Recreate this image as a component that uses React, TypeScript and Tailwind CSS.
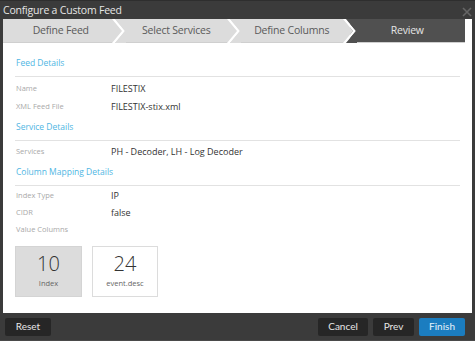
import React from 'react';

const steps = ['Define Feed', 'Select Services', 'Define Columns', 'Review'];

function Chevron({ left, right }: { left: string; right: string }) {
  return (
    <svg className="absolute right-[-7px] top-0 z-10" width="14" height="24" viewBox="0 0 14 24">
      <polygon points="0,0 10,12 0,24" fill={left} />
      <polygon points="0,0 3,0 13,12 3,24 0,24 10,12" fill="#ffffff" />
      <polygon points="3,0 14,0 14,24 3,24 13,12" fill={right} />
    </svg>
  );
}

function Step({ label, index }: { label: string; index: number }) {
  const active = index === 3;
  const bg = active ? '#505050' : '#dcdcdc';
  const next = index + 1 === 3 ? '#505050' : '#dcdcdc';
  return (
    <div className="relative flex-1 h-full flex items-center justify-center" style={{ background: bg }}>
      <span className={active ? 'text-[10.5px] tracking-[-0.2px] text-[#e4e4e4]' : 'text-[10.5px] tracking-[-0.2px] text-[#5a5a5a]'}>
        {label}
      </span>
      {index < steps.length - 1 && <Chevron left={bg} right={next} />}
    </div>
  );
}

function Row({ label, value }: { label: string; value: string }) {
  return (
    <div className="flex items-center h-[17px]">
      <span className="w-[95px] text-[7.5px] text-[#a9a9a9]">{label}</span>
      <span className="text-[9px] text-[#333]">{value}</span>
    </div>
  );
}

function Section({ title, first }: { title: string; first?: boolean }) {
  return (
    <div className={first ? 'flex flex-col' : 'flex flex-col mt-[2px]'}>
      <div className="h-[23px] flex items-start">
        <span className="h-[20px] flex items-center text-[8.5px] text-[#4fb6e3]">{title}</span>
      </div>
      <div className="h-px bg-[#e2e2e2] mr-[12px] -ml-px" />
    </div>
  );
}

export default function App() {
  return (
    <div className="w-[475px] h-[341px] bg-[#3b3b3b] flex flex-col" style={{ fontFamily: '"Open Sans", sans-serif' }}>
      <div className="h-[19px] flex items-center justify-between pl-[3px] pr-[2px] border-t border-[#2e2e2e]">
        <span className="text-[10.5px] tracking-[-0.2px] text-[#e6e6e6] leading-none">Configure a Custom Feed</span>
        <svg width="12" height="12" viewBox="0 0 12 12" className="mt-[4px]">
          <path d="M2 2 L10 10 M10 2 L2 10" stroke="#666666" strokeWidth="1.6" />
        </svg>
      </div>
      <div className="flex-1 flex flex-col ml-[3px] mr-[3px] bg-white">
        <div className="h-[24px] flex mr-[7px] border-b border-[#cfcfcf]">
          {steps.map((s, i) => (
            <Step key={s} label={s} index={i} />
          ))}
        </div>
        <div className="flex-1 flex flex-col pl-[13px] pt-[10px]">
          <Section title="Feed Details" first />
          <div className="flex flex-col pt-[3px]">
            <Row label="Name" value="FILESTIX" />
            <div className="h-[1px]" />
            <Row label="XML Feed File" value="FILESTIX-stix.xml" />
          </div>
          <Section title="Service Details" />
          <div className="flex flex-col pt-[2px]">
            <Row label="Services" value="PH - Decoder,  LH - Log Decoder" />
          </div>
          <Section title="Column Mapping Details" />
          <div className="flex flex-col pt-[1px]">
            <Row label="Index Type" value="IP" />
            <Row label="CIDR" value="false" />
            <Row label="Value Columns" value="" />
          </div>
          <div className="flex gap-[10px] mt-[8px] -ml-px">
            <div className="w-[67px] h-[51px] bg-[#dcdcdc] border border-[#d4d4d4] flex flex-col items-center justify-center">
              <span className="text-[20px] font-light leading-none text-[#333]">10</span>
              <span className="text-[7.5px] text-[#666] mt-[4px]">Index</span>
            </div>
            <div className="w-[66px] h-[51px] bg-white border border-[#dcdcdc] flex flex-col items-center justify-center">
              <span className="text-[20px] font-light leading-none text-[#333]">24</span>
              <span className="text-[7.5px] text-[#666] mt-[4px]">event.desc</span>
            </div>
          </div>
        </div>
      </div>
      <div className="h-[28px] flex items-center px-[5px] gap-[4px] border-b border-[#4a4a4a]" style={{ fontFamily: 'Lato, sans-serif' }}>
        <button className="w-[46px] h-[18px] bg-[#262626] text-[10px] text-[#e6e6e6] rounded-[2px]">Reset</button>
        <div className="flex-1" />
        <button className="w-[50px] h-[18px] bg-[#262626] text-[10px] text-[#e6e6e6] rounded-[2px]">Cancel</button>
        <button className="w-[41px] h-[18px] bg-[#262626] text-[10px] text-[#e6e6e6] rounded-[2px] ml-[1px]">Prev</button>
        <button className="w-[46px] h-[18px] bg-[#1b7dc0] text-[10px] text-[#e6f2fa] rounded-[2px] ml-[1px] mr-[5px]">Finish</button>
      </div>
    </div>
  );
}
